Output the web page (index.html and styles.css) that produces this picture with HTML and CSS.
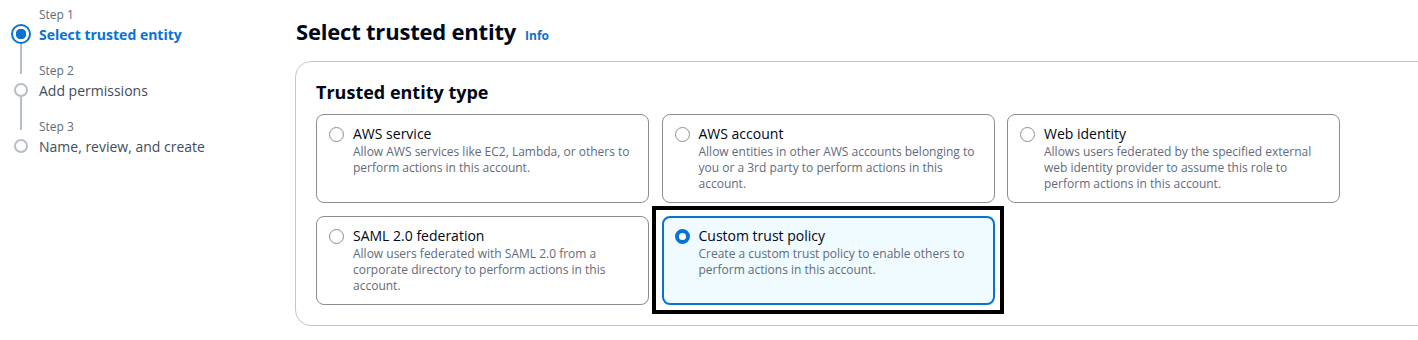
FILE: index.html
```html
<!DOCTYPE html>
<html lang="en">
<head>
  <meta charset="UTF-8">
  <meta name="viewport" content="width=device-width, initial-scale=1.0">
  <title>Create role - Select trusted entity</title>
  <link rel="stylesheet" href="styles.css">
</head>
<body>
  <div class="page">
    <nav class="wizard-nav">
      <ol class="steps">
        <li class="step active">
          <span class="step-label">Step 1</span>
          <span class="step-dot"></span>
          <span class="step-title">Select trusted entity</span>
        </li>
        <li class="step">
          <span class="step-label">Step 2</span>
          <span class="step-dot"></span>
          <span class="step-title">Add permissions</span>
        </li>
        <li class="step">
          <span class="step-label">Step 3</span>
          <span class="step-dot"></span>
          <span class="step-title">Name, review, and create</span>
        </li>
      </ol>
    </nav>

    <main class="content">
      <div class="page-header">
        <h1>Select trusted entity</h1>
        <a class="info-link" href="#">Info</a>
      </div>

      <section class="container">
        <h2>Trusted entity type</h2>
        <div class="tiles">
          <label class="tile">
            <span class="radio"></span>
            <span class="tile-text">
              <span class="tile-title">AWS service</span>
              <span class="tile-desc">Allow AWS services like EC2, Lambda, or others to perform actions in this account.</span>
            </span>
          </label>
          <label class="tile">
            <span class="radio"></span>
            <span class="tile-text">
              <span class="tile-title">AWS account</span>
              <span class="tile-desc">Allow entities in other AWS accounts belonging to you or a 3rd party to perform actions in this account.</span>
            </span>
          </label>
          <label class="tile">
            <span class="radio"></span>
            <span class="tile-text">
              <span class="tile-title">Web identity</span>
              <span class="tile-desc">Allows users federated by the specified external web identity provider to assume this role to perform actions in this account.</span>
            </span>
          </label>
          <label class="tile">
            <span class="radio"></span>
            <span class="tile-text">
              <span class="tile-title">SAML 2.0 federation</span>
              <span class="tile-desc">Allow users federated with SAML 2.0 from a corporate directory to perform actions in this account.</span>
            </span>
          </label>
          <label class="tile selected">
            <span class="radio"></span>
            <span class="tile-text">
              <span class="tile-title">Custom trust policy</span>
              <span class="tile-desc">Create a custom trust policy to enable others to perform actions in this account.</span>
            </span>
          </label>
        </div>
      </section>
    </main>
  </div>
</body>
</html>
```

FILE: styles.css
```css
* { margin: 0; padding: 0; box-sizing: border-box; }
body { background: #ffffff; color: #000716; font-family: 'Open Sans', 'Noto Sans', sans-serif; overflow: hidden; }

.page { display: flex; width: 1418px; overflow: hidden; }

/* === Wizard navigation === */
.wizard-nav { width: 295px; flex: none; padding-top: 4px; }
.steps { list-style: none; }
.step {
  position: relative;
  display: grid;
  grid-template-columns: 39px 1fr;
  grid-template-rows: 20px 20px;
  align-items: center;
  margin-bottom: 16px;
}
.step + .step::before {
  content: "";
  position: absolute;
  left: 20px;
  top: -26px;
  width: 2px;
  height: 40px;
  background: #b6bec9;
}
.step-label { grid-column: 2; grid-row: 1; font-size: 12px; color: #5f6b7a; }
.step-title { grid-column: 2; grid-row: 2; font-size: 14px; color: #414d5c; }
.step-dot {
  position: relative;
  z-index: 1;
  grid-column: 1; grid-row: 2;
  justify-self: center;
  margin-left: 3px;
  width: 14px; height: 14px;
  border: 2px solid #b6bec9;
  border-radius: 50%;
  background: #fff;
}
.step.active .step-title { color: #0972d3; font-weight: 700; }
.step.active .step-dot {
  width: 20px; height: 20px;
  border: 2px solid #0972d3;
  background: radial-gradient(circle, #0972d3 0 5px, #fff 5.5px);
}

/* === Main content === */
.content { flex: 1; min-width: 0; padding-top: 16px; }
.page-header { display: flex; align-items: baseline; gap: 9px; height: 45px; padding-left: 1px; }
.page-header h1 { font-size: 22px; font-weight: 700; letter-spacing: -0.2px; }
.info-link { font-size: 12px; font-weight: 700; color: #0972d3; text-decoration: none; }

.container {
  width: 1140px;
  border: 1px solid #c6c6cd;
  border-radius: 16px;
  padding: 16px 20px 20px;
  background: #fff;
}
.container h2 { font-size: 18px; font-weight: 700; line-height: 28px; margin-bottom: 8px; }

.tiles { display: grid; grid-template-columns: repeat(3, 333px); grid-auto-rows: 89px; gap: 13px 12.5px; }
.tile {
  position: relative;
  display: flex;
  gap: 9px;
  padding: 9px 12px;
  border: 1px solid #8c8c94;
  border-radius: 8px;
  cursor: pointer;
}
.radio {
  flex: none;
  width: 15px; height: 15px;
  margin-top: 3px;
  border: 1.5px solid #8c8c94;
  border-radius: 50%;
  background: #fff;
}
.tile-text { display: flex; flex-direction: column; }
.tile-title { font-size: 14px; line-height: 20px; color: #000716; }
.tile-desc { font-size: 12px; line-height: 16px; color: #5f6b7a; }

.tile.selected {
  border: 2px solid #0972d3;
  background: #f0fbff;
  padding: 8px 11px;
}
/* highlight frame drawn round the chosen tile */
.tile.selected::after {
  content: "";
  position: absolute;
  inset: -12px -11px -11px -12px;
  border: 4px solid #000;
}
.tile.selected .radio { border: 4.5px solid #0972d3; }
```
